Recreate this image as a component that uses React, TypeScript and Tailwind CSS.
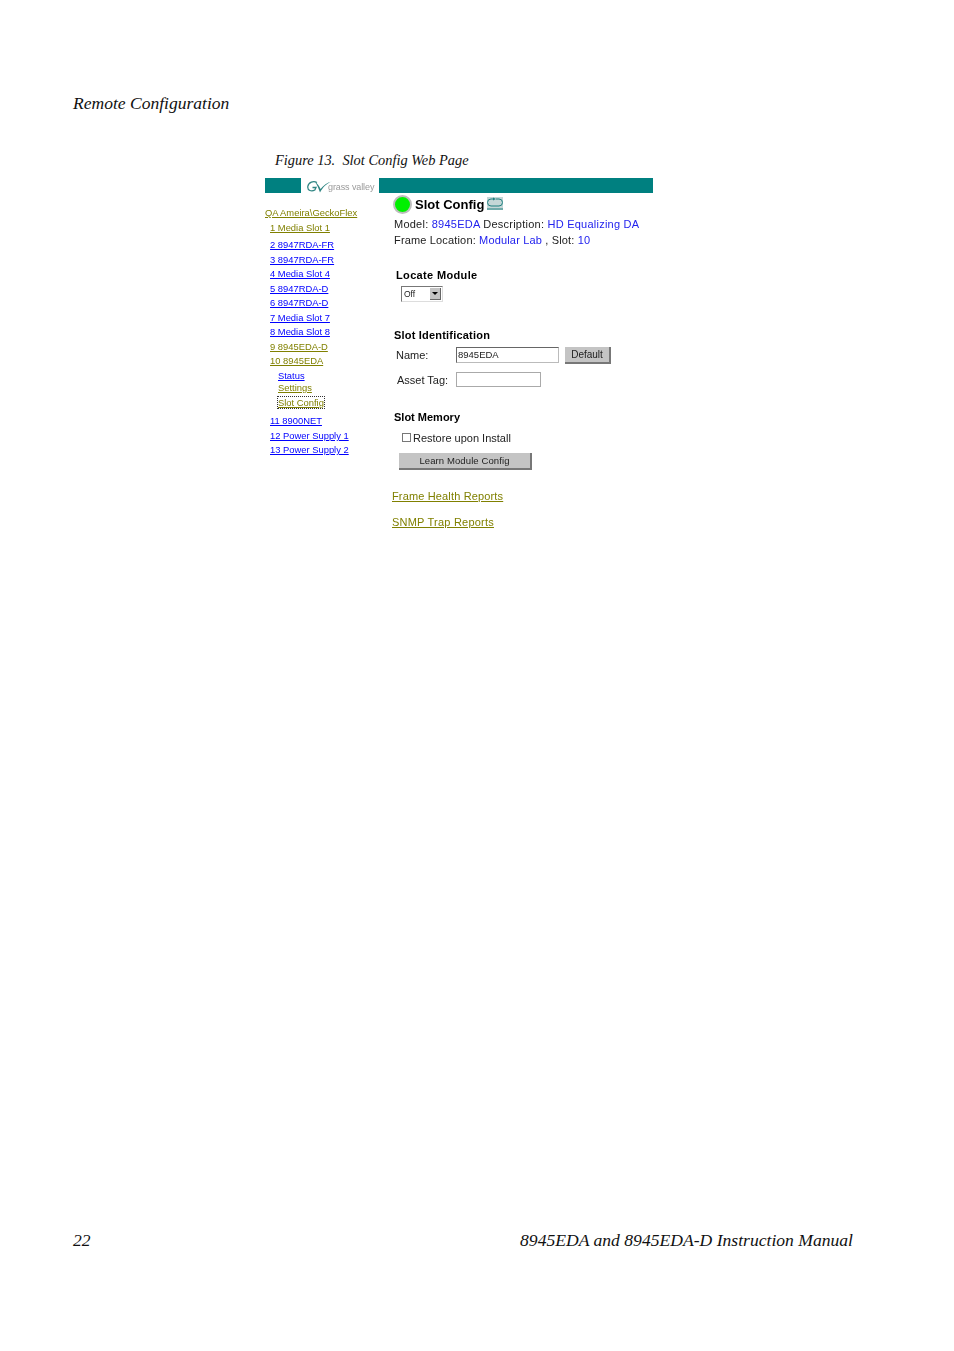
const serif = "font-['Liberation_Serif',serif] italic text-[#111]";

type NavItem = { label: string; olive?: boolean; sub?: boolean; focus?: boolean; h: string };

const nav: NavItem[] = [
  { label: "1 Media Slot 1", olive: true, h: "h-[17px]" },
  { label: "2 8947RDA-FR", h: "h-[15px]" },
  { label: "3 8947RDA-FR", h: "h-[14px]" },
  { label: "4 Media Slot 4", h: "h-[15px]" },
  { label: "5 8947RDA-D", h: "h-[14px]" },
  { label: "6 8947RDA-D", h: "h-[15px]" },
  { label: "7 Media Slot 7", h: "h-[14px]" },
  { label: "8 Media Slot 8", h: "h-[15px]" },
  { label: "9 8945EDA-D", olive: true, h: "h-[14px]" },
  { label: "10 8945EDA", olive: true, h: "h-[15px]" },
  { label: "Status", sub: true, h: "h-[12px]" },
  { label: "Settings", sub: true, olive: true, h: "h-[15px]" },
  { label: "Slot Config", sub: true, olive: true, focus: true, h: "h-[18px]" },
  { label: "11 8900NET", h: "h-[15px]" },
  { label: "12 Power Supply 1", h: "h-[14px]" },
  { label: "13 Power Supply 2", h: "h-[15px]" },
];

function Sidebar() {
  return (
    <div className="w-[129px] shrink-0 pt-[14px] font-['Liberation_Sans',sans-serif] text-[9.4px] leading-[12px] blur-[0.35px]">
      <div className="h-[15px] text-[#808000] underline whitespace-nowrap">QA Ameira\GeckoFlex</div>
      {nav.map((n) => (
        <div key={n.label} className={`${n.h} whitespace-nowrap ${n.sub ? "pl-[13px]" : "pl-[5px]"}`}>
          <span
            className={`underline ${n.olive ? "text-[#808000]" : "text-[#0000ff]"} ${
              n.focus ? "outline-1 outline-dotted outline-[#333]" : ""
            }`}
          >
            {n.label}
          </span>
        </div>
      ))}
    </div>
  );
}

function Logo() {
  return (
    <div className="w-[78px] h-[17px] flex items-center pl-[6px] bg-white">
      <svg width="26" height="14" viewBox="0 0 26 14" className="shrink-0 blur-[0.25px]">
        <path d="M10 2.500C6.500.5 1.500 2 .8 6.500c-.5 4 3.700 5.500 7 3.500L9 7.500H5.500" fill="none" stroke="#2f8583" strokeWidth="1.300" />
        <path d="M8 2c2.500 3 3.500 7 5 10.500C15.500 8 19 3.500 25 1.500 20 2.500 16.500 5.500 13.500 9 12.500 6.500 10.500 3 8 2Z" fill="#2f8583" />
      </svg>
      <span className="font-['Liberation_Sans',sans-serif] text-[9px] tracking-[-0.1px] text-[#9a9a9a] whitespace-nowrap -ml-[5px] mt-[2px] blur-[0.25px]">
        grass valley
      </span>
    </div>
  );
}

function Main() {
  return (
    <div className="flex-1 font-['Liberation_Sans',sans-serif] text-[11px] leading-[14px] text-[#222] blur-[0.3px]">
      <div className="flex items-center h-[22px] pt-[1px]">
        <div className="w-[19px] h-[19px] rounded-full bg-[#00f000] border-[2px] border-[#bdbdbd] -ml-[1px] mr-[3px]" />
        <span className="font-bold text-[13px] text-black">Slot Config</span>
        <svg width="16" height="13" viewBox="0 0 16 13" className="ml-[3px] -mt-[3px]">
          <rect width="16" height="13" fill="#c4d6d6" />
          <path d="M6 2H4a3 3 0 0 0 0 7h8a3 3 0 0 0 0-7H9" fill="none" stroke="#1c7f7f" />
          <path d="M6 .5 9 2 6 3.500Z" fill="#1c7f7f" />
          <path d="M0 12h16" stroke="#1c7f7f" />
        </svg>
      </div>
      <div className="mt-[2px] h-[16px] whitespace-nowrap tracking-[0.24px]">
        Model: <span className="text-[#2222ee]">8945EDA</span> Description: <span className="text-[#2222ee]">HD Equalizing DA</span>
      </div>
      <div className="h-[16px] whitespace-nowrap tracking-[0.16px]">
        Frame Location: <span className="text-[#2222ee]">Modular Lab</span> , Slot: <span className="text-[#2222ee]">10</span>
      </div>

      <div className="mt-[19px] ml-[2px] font-bold text-[11px] text-black tracking-[0.35px]">Locate Module</div>
      <div className="mt-[4px] ml-[7px] w-[42px] h-[16px] border border-[#777] border-b-[#ddd] border-r-[#ddd] flex items-center justify-between text-[8.5px] pl-[2px] pr-[1px]">
        <span>Off</span>
        <span className="w-[11px] h-[12px] bg-[#c4c4c4] border-r border-b border-[#666] flex items-center justify-center">
          <span className="w-0 h-0 border-x-[3px] border-x-transparent border-t-[3px] border-t-black" />
        </span>
      </div>

      <div className="mt-[26px] font-bold text-black tracking-[0.2px]">Slot Identification</div>
      <div className="mt-[4px] flex items-center h-[18px]">
        <span className="w-[62px] pl-[2px]">Name:</span>
        <div className="w-[103px] h-[16px] border border-[#bbb] border-t-[#666] border-l-[#666] text-[9.500px] leading-[14px] pl-[1px]">8945EDA</div>
        <div className="ml-[6px] w-[46px] h-[17px] pt-[1px] bg-[#c4c4c4] border-r-2 border-b-2 border-[#777] flex items-center justify-center text-[10px]">Default</div>
      </div>
      <div className="mt-[8px] flex items-center h-[15px]">
        <span className="w-[62px] pl-[3px]">Asset Tag:</span>
        <div className="w-[85px] h-[15px] border border-[#aaa]" />
      </div>

      <div className="mt-[23px] font-bold text-black">Slot Memory</div>
      <div className="mt-[6px] flex items-center h-[15px] pl-[8px]">
        <span className="w-[9px] h-[9px] border border-[#777] mr-[2px]" />
        <span>Restore upon Install</span>
      </div>
      <div className="mt-[8px] ml-[5px] w-[133px] h-[17px] bg-[#c4c4c4] border-r-2 border-b-2 border-[#777] flex items-center justify-center text-[9.500px] tracking-[0.1px]">Learn Module Config</div>

      <div className="mt-[19px] -ml-[2px] text-[#808000] underline tracking-[0.15px]">Frame Health Reports</div>
      <div className="mt-[12px] -ml-[2px] text-[#808000] underline tracking-[0.22px]">SNMP Trap Reports</div>
    </div>
  );
}

export default function App() {
  return (
    <div className="w-[954px] h-[1351px] bg-white flex flex-col">
      <div className={`${serif} text-[17.55px] leading-[20px] pt-[93px] pl-[73px]`}>Remote Configuration</div>
      <div className={`${serif} text-[14.4px] leading-[18px] mt-[38px] pl-[275px] whitespace-pre`}>Figure 13.  Slot Config Web Page</div>

      <div className="ml-[265px] mt-[9px] w-[388px]">
        <div className="flex h-[15px] bg-[#008080] pl-[36px]">
          <Logo />
        </div>
        <div className="flex">
          <Sidebar />
          <Main />
        </div>
      </div>

      <div className={`${serif} mt-auto mb-[101px] mx-[73px] w-[780px] flex justify-between text-[17.6px] leading-[20px]`}>
        <span>22</span>
        <span>8945EDA and 8945EDA-D Instruction Manual</span>
      </div>
    </div>
  );
}
